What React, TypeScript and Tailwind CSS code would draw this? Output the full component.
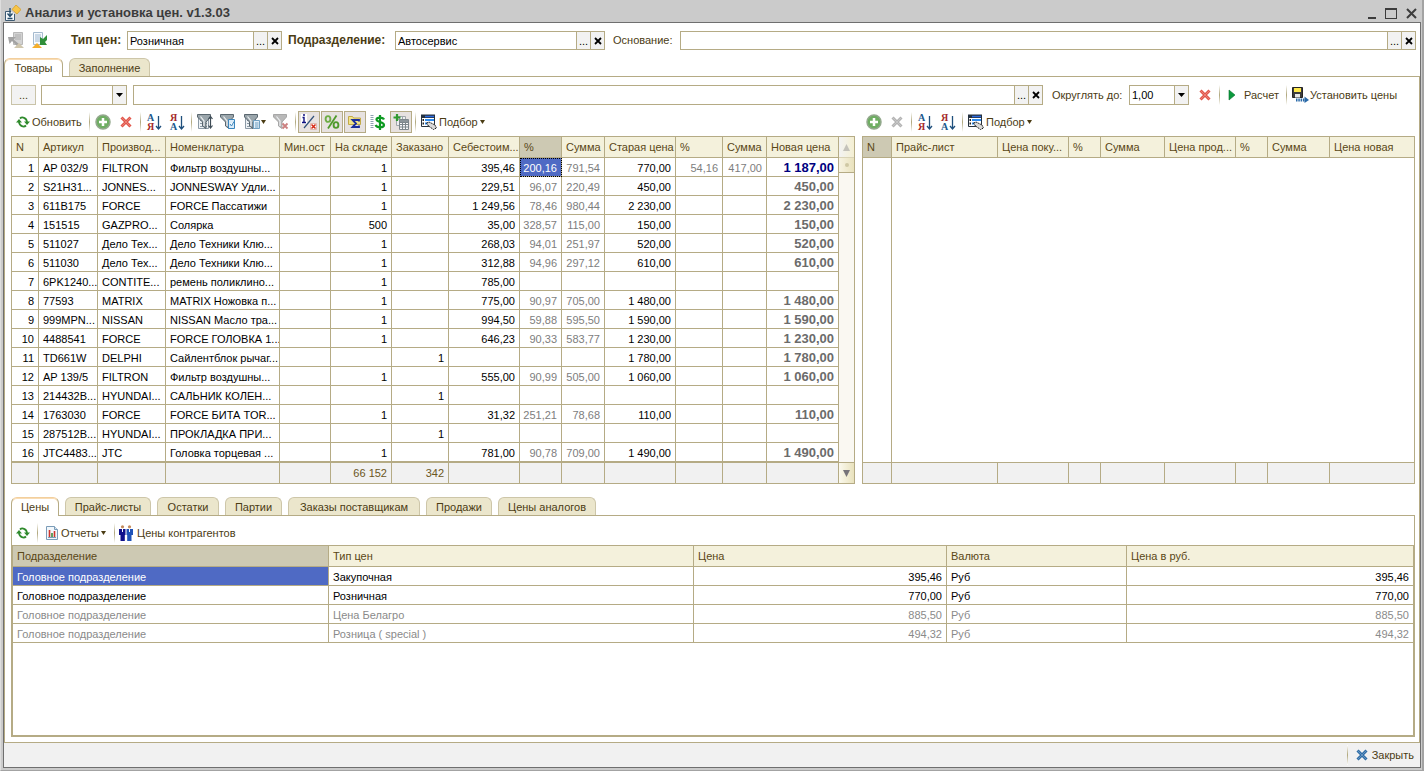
import { FC, ReactNode, useState } from 'react'
import clsx from 'clsx'

type IconProps = { className?: string }

const AppIcon: FC = () => (
	<svg width="16" height="16" viewBox="0 0 16 16" aria-hidden="true">
		<path d="M11 0l5 4.500-4 4.500-5-4.500z" fill="#f7c548" stroke="#d79a1c" strokeWidth=".7" />
		<path d="M6 6.500H.500v9h9V9" fill="#f4f8fb" stroke="#3d5a72" />
		<path d="M5 3v8M2.500 8.500L5 11.500l2.500-3M2.500 13.500h5" fill="none" stroke="#234a68" strokeWidth="1.300" />
	</svg>
)

const SheetIcon: FC<{ disabled?: boolean }> = ({ disabled }) => (
	<svg width="16" height="16" viewBox="0 0 16 16" aria-hidden="true">
		<path
			d={disabled ? 'M5.500.500h9v12h-9z' : 'M1.500.500h9v12h-9z'}
			fill={disabled ? '#d3d3d3' : '#f7fafd'}
			stroke={disabled ? '#b8b8b8' : '#a5bace'}
		/>
		<path
			d={disabled ? 'M7 3h6M7 5h6M7 7h6' : 'M3 3h6M3 5h6M3 7h6M3 9h6'}
			stroke={disabled ? '#adadad' : '#9cb6d0'}
		/>
		{disabled ? (
			<path d="M0 5h8L5.500 7.500 11 12l-2 2-5-5L1.500 12z" fill="#a3a3a3" />
		) : (
			<path d="M15 3l-4 4-3-2v8h7l-2-3 2-2z" fill="#2f8f3a" />
		)}
		<path d={disabled ? 'M6 16l5-5 5 5z' : 'M0 16l5-5 5 5z'} fill={disabled ? '#cfc6ad' : '#f4ae2c'} />
	</svg>
)

const RefreshIcon: FC = () => (
	<svg width="14" height="14" viewBox="0 0 14 14" aria-hidden="true">
		<path d="M4 3.500C6 1.500 10.500 2.500 11 7M10 10.500C8 12.500 3.500 11.500 3 7" fill="none" stroke="#2f8a2c" strokeWidth="1.800" />
		<path d="M8 6.500h6l-3 3.500zM0 7.500h6L3 4z" fill="#2f8a2c" />
	</svg>
)

const PlusIcon: FC = () => (
	<svg width="16" height="16" viewBox="0 0 16 16" aria-hidden="true">
		<circle cx="8" cy="8" r="7" fill="#6fae63" stroke="#93a88d" strokeWidth="1.500" />
		<path d="M8 4v8M4 8h8" stroke="#fff" strokeWidth="2.500" />
	</svg>
)

const CrossIcon: FC<IconProps> = ({ className }) => (
	<svg width="12" height="12" viewBox="0 0 12 12" className={className} aria-hidden="true">
		<path d="M1.500 1.500l9 9M10.500 1.500l-9 9" stroke="currentColor" strokeWidth="3" />
		<path d="M2 2l8 8M10 2l-8 8" stroke="#fff" strokeOpacity=".25" strokeWidth="1" />
	</svg>
)

const SortIcon: FC<{ desc?: boolean }> = ({ desc }) => (
	<svg width="16" height="18" viewBox="0 0 16 18" aria-hidden="true">
		<g className="font-['Liberation_Serif',serif] text-[10px] leading-none font-bold">
			<text x="1" y="8" fill={desc ? '#a52a2a' : '#20588c'}>{desc ? 'Я' : 'А'}</text>
			<text x="1" y="17" fill={desc ? '#20588c' : '#a52a2a'}>{desc ? 'А' : 'Я'}</text>
		</g>
		<path d="M12.500 3v13M10 13l2.500 3 2.500-3" fill="none" stroke="#1f4f7c" strokeWidth="1.300" />
	</svg>
)

const FilterIcon: FC<{ kind: 'sort' | 'check' | 'list' | 'off' }> = ({ kind }) => (
	<svg width="16" height="16" viewBox="0 0 16 16" className="shrink-0" aria-hidden="true">
		{(kind === 'sort' || kind === 'list') && (
			<path d="M1.500 2.500h10v12h-10zM3 6.500h7M3 9.500h7M3 12.500h7" fill="#eef2f5" stroke="#8c9aa6" />
		)}
		<path
			d="M.500.500h13v2.500L9 8v6.500L5.500 12V8L.500 3z"
			fill={kind === 'off' ? '#b9b9b9' : '#9aa5ab'}
			stroke={kind === 'off' ? '#a0a0a0' : '#4d5a63'}
			strokeWidth=".9"
		/>
		<path d="M3.500 2.500L7 7v5" fill="none" stroke="#eef1f3" strokeWidth="1.200" />
		{kind === 'sort' && <path d="M13.500 2v12M11.500 5l2-2.500 2 2.500M11.500 11.500l2 2.500 2-2.500" fill="none" stroke="#3f4d57" strokeWidth="1.200" />}
		{kind === 'check' && (
			<path d="M8.500 5.500h6v9h-6zM10 10l1.500 2L14 7.500" fill="#dcecf8" stroke="#3c86bd" />
		)}
		{kind === 'list' && <path d="M9.500 6.500h6v8h-6zM11 9h3.500M11 11h3.500M11 13h3.500" fill="#e4f0f9" stroke="#6f9fc0" />}
		{kind === 'off' && <path d="M9.500 9.500l5 5M14.500 9.500l-5 5" stroke="#cc8080" strokeWidth="1.800" />}
	</svg>
)

const MarginIcon: FC = () => (
	<svg width="16" height="16" viewBox="0 0 16 16" aria-hidden="true">
		<path d="M0 0h6v10H0z" fill="#fff" />
		<path d="M2 1h2M1.500 3.500H3V8M1 8.500h4" fill="none" stroke="#101080" strokeWidth="1.400" />
		<path d="M13 2L3 14" stroke="#32527c" strokeWidth="1.200" />
		<path d="M9.500 9.500h6v6h-6z" fill="#fff" stroke="#d8aaa0" strokeWidth=".8" />
		<path d="M10.500 10.500l4 4M14.500 10.500l-4 4" stroke="#d52510" strokeWidth="1.500" />
	</svg>
)

const PercentIcon: FC = () => (
	<svg width="16" height="16" viewBox="0 0 16 16" aria-hidden="true">
		<path d="M12.500 1.500L4 14.500" stroke="#4f9a2c" strokeWidth="1.800" />
		<ellipse cx="4" cy="5" rx="2.400" ry="2.900" fill="none" stroke="#6dad45" strokeWidth="1.900" />
		<ellipse cx="12" cy="11" rx="2.400" ry="2.900" fill="none" stroke="#4f9a2c" strokeWidth="1.900" />
	</svg>
)

const SumIcon: FC = () => (
	<svg width="16" height="16" viewBox="0 0 16 16" aria-hidden="true">
		<path d="M1.500 10.500v-8h4l1 1.500h7v6.500z" fill="#f3e58a" stroke="#c2aa48" />
		<path d="M12 7.500V6H5.500L9 9.500 5.500 13H12v-1.500" fill="none" stroke="#1b2f9c" strokeWidth="1.800" />
	</svg>
)

const DollarIcon: FC = () => (
	<svg width="16" height="16" viewBox="0 0 16 16" aria-hidden="true">
		<path d="M2 1v14" stroke="#8ea2b2" strokeWidth="3" strokeDasharray="1 1" />
		<path d="M14 5.500C13 3 6.500 2.800 6.500 5.500S14 8 14 11s-7 3-8.500 0M10 1v15" fill="none" stroke="#0d9a22" strokeWidth="2.200" />
	</svg>
)

const TableAddIcon: FC = () => (
	<svg width="17" height="16" viewBox="0 0 17 16" aria-hidden="true">
		<path d="M3.500 2.500h9v9h-9zM3 5.500h9M6.500 3v8M9.500 3v8" fill="#eef0f1" stroke="#a0a7ab" />
		<path d="M6.500 5.500h9v10h-9zM6 8.500h9M6 10.500h9M6 13h9M9.500 8v8M12.500 8v8" fill="#f7f8f9" stroke="#7d868b" />
		<path d="M7 6h8v2H7z" fill="#8b9499" />
		<path d="M4 0v7M.500 3.500h7" stroke="#2f9a2f" strokeWidth="2.200" />
	</svg>
)

const PickIcon: FC = () => (
	<svg width="17" height="16" viewBox="0 0 17 16" aria-hidden="true">
		<path d="M1.500 1.500h13v11h-13z" fill="#fff" stroke="#26313c" />
		<path d="M1 .500h14v3.500H1z" fill="#24313f" />
		<path d="M5 2.500h9" stroke="#2c6be0" strokeWidth="1.500" />
		<path d="M5 6h9M5 9.500h5" stroke="#2c8bf0" strokeWidth="2" />
		<path d="M2.500 6h1.500M2.500 9.500h1.500" stroke="#222" strokeWidth="2" />
		<path d="M6.500 9l2.500-1 6 3 1.500 3-3 1.500-5-3.500z" fill="#d9d9d9" stroke="#1d1d1d" strokeDasharray="1.500 .700" />
	</svg>
)

const PlayIcon: FC = () => (
	<svg width="8" height="12" viewBox="0 0 8 12" aria-hidden="true">
		<path d="M1 1l6 5-6 5z" fill="#0b9a3d" stroke="#08702b" strokeWidth=".6" />
	</svg>
)

const SaveIcon: FC = () => (
	<svg width="17" height="16" viewBox="0 0 17 16" aria-hidden="true">
		<path d="M.500.500h10v10H.500z" fill="#3d3d3d" stroke="#252525" />
		<path d="M2 1h7v4H2z" fill="#ffe94a" />
		<path d="M3 7h5v3.500H3z" fill="#e8e8e8" />
		<path d="M4 13h9" stroke="#2969a8" strokeWidth="3" strokeDasharray="1.500 .800" />
		<path d="M12.500 9.500L17 13l-4.500 3z" fill="#2969a8" />
	</svg>
)

const ReportIcon: FC = () => (
	<svg width="13" height="14" viewBox="0 0 13 14" aria-hidden="true">
		<path d="M.500.500h8l3 3v10H.500z" fill="#f2f7fb" stroke="#7b9cb8" />
		<path d="M8.500.500v3h3" fill="#d3e2ee" stroke="#7b9cb8" />
		<path d="M3.500 4v7" stroke="#d0352b" strokeWidth="1.600" />
		<path d="M6 7v4" stroke="#3b8a3a" strokeWidth="1.600" />
		<path d="M8.500 5v6" stroke="#d0352b" strokeWidth="1.600" />
		<path d="M2 11.500h8" stroke="#7b9cb8" />
	</svg>
)

const PeopleIcon: FC = () => (
	<svg width="14" height="16" viewBox="0 0 14 16" aria-hidden="true">
		<circle cx="3.500" cy="1.800" r="1.600" fill="#c58c5e" />
		<circle cx="10.500" cy="1.800" r="1.600" fill="#c58c5e" />
		<path d="M0 4h6.500v6H5.800v6H1.500v-6H0z" fill="#10108c" />
		<path d="M7.500 4H14v6h-1.500v6H8.200v-6h-.700z" fill="#1f52b8" />
		<path d="M3.500 3.500V7M10.500 3.500V7" stroke="#fff" />
	</svg>
)

const Arrow: FC<IconProps> = ({ className }) => (
	<svg width="7" height="4" viewBox="0 0 7 4" preserveAspectRatio="none" className={className} aria-hidden="true">
		<path d="M0 0h7L3.500 4z" fill="currentColor" />
	</svg>
)

const Separator: FC = () => (
	<span className="flex h-5 w-1 shrink-0 justify-center">
		<span className="w-px bg-linear-to-b from-white via-[#b0a77c] to-white" />
	</span>
)

const IconButton: FC<{ label: string; pressed?: boolean; className?: string; children: ReactNode }> = ({
	label,
	pressed,
	className = 'w-[22px]',
	children
}) => (
	<button
		type="button"
		aria-label={label}
		title={label}
		className={clsx(
			'flex h-[22px] shrink-0 items-center justify-center border',
			pressed ? 'border-[#b5ab85] bg-[#e7e2e0]' : 'border-transparent',
			className
		)}
	>
		{children}
	</button>
)

const TextButton: FC<{ className?: string; children: ReactNode }> = ({ className, children }) => (
	<button type="button" className={clsx('flex h-[22px] shrink-0 items-center whitespace-nowrap', className)}>
		{children}
	</button>
)

const SmallButton: FC<{ label: string; children: ReactNode }> = ({ label, children }) => (
	<button
		type="button"
		aria-label={label}
		className="flex w-[14px] shrink-0 items-center justify-center border-l border-[#b5ab85] bg-[#f2f2f2] text-black"
	>
		{children}
	</button>
)

const Field: FC<{ id: string; label?: string; value?: string; dropdown?: boolean; className?: string }> = ({
	id,
	label,
	value = '',
	dropdown,
	className
}) => {
	const [text, setText] = useState(value)
	return (
		<div className={clsx('flex border border-[#b5ab85] bg-white', className)}>
			<input
				id={id}
				aria-label={label}
				value={text}
				onChange={(e) => setText(e.target.value)}
				className="w-0 min-w-0 flex-1 px-0.5 text-black outline-none"
			/>
			{dropdown ? (
				<SmallButton label="Открыть список">
					<Arrow />
				</SmallButton>
			) : (
				<>
					<SmallButton label="Выбрать">...</SmallButton>
					<SmallButton label="Очистить">
						<svg width="8" height="8" viewBox="0 0 8 8" aria-hidden="true">
							<path d="M1 1l6 6M7 1L1 7" stroke="#000" strokeWidth="1.800" />
						</svg>
					</SmallButton>
				</>
			)}
		</div>
	)
}

const Tabs: FC<{ items: { name: string; width: string }[] }> = ({ items }) => {
	const [active, setActive] = useState(items[0].name)
	return (
		<div role="tablist" className="flex h-[18px] gap-[6px]">
			{items.map(({ name, width }) => (
				<button
					key={name}
					type="button"
					role="tab"
					aria-selected={name === active}
					onClick={() => setActive(name)}
					className={clsx(
						'rounded-t-md border border-b-0 whitespace-nowrap',
						width,
						name === active
							? 'z-10 h-[19px] border-[#b5ab85] border-t-[#f2cf9d] bg-white shadow-[inset_0_1px_0_#f9dcb4]'
							: 'h-[18px] border-[#cdc6a9] bg-[#ebe6cc]'
					)}
				>
					{name}
				</button>
			))}
		</div>
	)
}

const goodsColumns = [
	{ title: 'N', width: 'w-[27px]' },
	{ title: 'Артикул', width: 'w-[59px]' },
	{ title: 'Производ...', width: 'w-[68px]' },
	{ title: 'Номенклатура', width: 'w-[114px]' },
	{ title: 'Мин.ост', width: 'w-[51px]' },
	{ title: 'На складе', width: 'w-[61px]' },
	{ title: 'Заказано', width: 'w-[57px]' },
	{ title: 'Себестоим...', width: 'w-[71px]' },
	{ title: '%', width: 'w-[42px]' },
	{ title: 'Сумма', width: 'w-[43px]' },
	{ title: 'Старая цена', width: 'w-[71px]' },
	{ title: '%', width: 'w-[47px]' },
	{ title: 'Сумма', width: 'w-[44px]' },
	{ title: 'Новая цена', width: 'w-[72px]' }
]

const goods = [
	['1', 'AP 032/9', 'FILTRON', 'Фильтр воздушны...', '', '1', '', '395,46', '200,16', '791,54', '770,00', '54,16', '417,00', '1 187,00'],
	['2', 'S21H31...', 'JONNES...', 'JONNESWAY Удли...', '', '1', '', '229,51', '96,07', '220,49', '450,00', '', '', '450,00'],
	['3', '611B175', 'FORCE', 'FORCE Пассатижи', '', '1', '', '1 249,56', '78,46', '980,44', '2 230,00', '', '', '2 230,00'],
	['4', '151515', 'GAZPRO...', 'Солярка', '', '500', '', '35,00', '328,57', '115,00', '150,00', '', '', '150,00'],
	['5', '511027', 'Дело Тех...', 'Дело Техники Клю...', '', '1', '', '268,03', '94,01', '251,97', '520,00', '', '', '520,00'],
	['6', '511030', 'Дело Тех...', 'Дело Техники Клю...', '', '1', '', '312,88', '94,96', '297,12', '610,00', '', '', '610,00'],
	['7', '6PK1240...', 'CONTITE...', 'ремень поликлино...', '', '1', '', '785,00', '', '', '', '', '', ''],
	['8', '77593', 'MATRIX', 'MATRIX Ножовка п...', '', '1', '', '775,00', '90,97', '705,00', '1 480,00', '', '', '1 480,00'],
	['9', '999MPN...', 'NISSAN', 'NISSAN Масло тра...', '', '1', '', '994,50', '59,88', '595,50', '1 590,00', '', '', '1 590,00'],
	['10', '4488541', 'FORCE', 'FORCE ГОЛОВКА 1...', '', '1', '', '646,23', '90,33', '583,77', '1 230,00', '', '', '1 230,00'],
	['11', 'TD661W', 'DELPHI', 'Сайлентблок рычаг...', '', '', '1', '', '', '', '1 780,00', '', '', '1 780,00'],
	['12', 'AP 139/5', 'FILTRON', 'Фильтр воздушны...', '', '1', '', '555,00', '90,99', '505,00', '1 060,00', '', '', '1 060,00'],
	['13', '214432B...', 'HYUNDAI...', 'САЛЬНИК КОЛЕН...', '', '', '1', '', '', '', '', '', '', ''],
	['14', '1763030', 'FORCE', 'FORCE БИТА TOR...', '', '1', '', '31,32', '251,21', '78,68', '110,00', '', '', '110,00'],
	['15', '287512B...', 'HYUNDAI...', 'ПРОКЛАДКА ПРИ...', '', '', '1', '', '', '', '', '', '', ''],
	['16', 'JTC4483...', 'JTC', 'Головка торцевая ...', '', '1', '', '781,00', '90,78', '709,00', '1 490,00', '', '', '1 490,00']
]

const goodsTotals = ['', '', '', '', '', '66 152', '342', '', '', '', '', '', '', '']

const priceListColumns = [
	{ title: 'N', width: 'w-[29px]' },
	{ title: 'Прайс-лист', width: 'w-[106px]' },
	{ title: 'Цена поку...', width: 'w-[71px]' },
	{ title: '%', width: 'w-[32px]' },
	{ title: 'Сумма', width: 'w-[64px]' },
	{ title: 'Цена прод...', width: 'w-[71px]' },
	{ title: '%', width: 'w-[32px]' },
	{ title: 'Сумма', width: 'w-[62px]' },
	{ title: 'Цена новая', width: 'w-[85px]' }
]

const priceColumns = [
	{ title: 'Подразделение', width: 'w-[316px]' },
	{ title: 'Тип цен', width: 'w-[365px]' },
	{ title: 'Цена', width: 'w-[253px]' },
	{ title: 'Валюта', width: 'w-[180px]' },
	{ title: 'Цена в руб.', width: 'w-[286px]' }
]

const prices = [
	{ cells: ['Головное подразделение', 'Закупочная', '395,46', 'Руб', '395,46'], muted: false },
	{ cells: ['Головное подразделение', 'Розничная', '770,00', 'Руб', '770,00'], muted: false },
	{ cells: ['Головное подразделение', 'Цена Белагро', '885,50', 'Руб', '885,50'], muted: true },
	{ cells: ['Головное подразделение', 'Розница ( special )', '494,32', 'Руб', '494,32'], muted: true }
]

const HeadRow: FC<{ columns: { title: string; width: string }[]; current: number; openEnd?: boolean }> = ({
	columns,
	current,
	openEnd
}) => (
	<thead>
		<tr>
			{columns.map(({ title, width }, i) => (
				<th
					key={i}
					scope="col"
					className={clsx(
						'h-[21px] overflow-hidden border-b border-[#b5ab85] pl-1 text-left font-normal whitespace-nowrap text-[#5a4716]',
						width,
						!(openEnd && i === columns.length - 1) && 'border-r',
						i === current ? 'bg-[#cdc9b3]' : 'bg-[#f4f1dc]'
					)}
				>
					{title}
				</th>
			))}
		</tr>
	</thead>
)

const goodsCellStyle = (row: number, col: number) => {
	if (row === 0 && col === 8) return 'bg-[#4f6ac4] text-white outline-1 -outline-offset-1 outline-dotted outline-black'
	if (col === 13) return row === 0 ? 'text-[13px] font-bold text-[#000080]' : 'text-[13px] font-bold text-[#6b6b6b]'
	if ([8, 9, 11, 12].includes(col)) return 'text-[#7d7d7d]'
	return 'text-black'
}

const GoodsTable: FC = () => (
	<div className="flex">
		<table className="w-full table-fixed border-separate border-spacing-0 border-t border-l border-[#b5ab85] bg-white">
			<HeadRow columns={goodsColumns} current={8} />
			<tbody>
				{goods.map((row, r) => (
					<tr key={row[0]}>
						{row.map((cell, c) => (
							<td
								key={c}
								className={clsx(
									'h-[19px] overflow-hidden border-r border-b border-[#b5ab85] pt-0.5 whitespace-nowrap',
									c === 0 || c > 3 ? 'pr-1 text-right' : 'pl-1 text-left',
									goodsCellStyle(r, c)
								)}
							>
								{cell}
							</td>
						))}
					</tr>
				))}
			</tbody>
			<tfoot>
				<tr>
					{goodsTotals.map((total, i) => (
						<td
							key={i}
							className="h-[22px] border-y border-r border-[#b5ab85] bg-[#f1f1f1] pr-1 text-right text-[#6b5622]"
						>
							{total}
						</td>
					))}
				</tr>
			</tfoot>
		</table>
		<div className="flex w-4 shrink-0 flex-col border-y border-r border-[#b5ab85] bg-[#faf8f2]">
			<button
				type="button"
				aria-label="Прокрутить вверх"
				className="flex h-[21px] items-center justify-center border-b border-[#d9d3b6] bg-linear-to-r from-[#f3f3f3] to-[#f4efd2] text-[#c4c2ba]"
			>
				<Arrow className="h-[7px] rotate-180" />
			</button>
			<div className="flex h-[15px] items-center justify-center border-b border-[#b5ab85] bg-linear-to-r from-[#f7f3e2] to-[#e9e2bd]">
				<span className="size-1 rounded-full bg-[#cfc8a4]" />
			</div>
			<button
				type="button"
				aria-label="Прокрутить вниз"
				className="mt-auto flex h-[21px] items-center justify-center border-t border-[#b5ab85] bg-linear-to-r from-[#fbf9ee] to-[#e9e2bd] text-[#77747a]"
			>
				<Arrow className="h-[7px]" />
			</button>
		</div>
	</div>
)

const PriceListTable: FC = () => (
	<table className="w-full flex-1 table-fixed border-separate border-spacing-0 border-t border-l border-[#b5ab85] bg-white">
		<HeadRow columns={priceListColumns} current={0} />
		<tbody>
			<tr>
				<td className="h-[304px] border-r border-[#b5ab85]" />
				<td colSpan={8} className="border-r border-[#b5ab85]" />
			</tr>
		</tbody>
		<tfoot>
			<tr>
				{priceListColumns.map((_, i) => (
					<td key={i} className="h-[22px] border-y border-r border-[#b5ab85] bg-[#f1f1f1]" />
				))}
			</tr>
		</tfoot>
	</table>
)

const PricesTable: FC = () => (
	<div className="flex-1 border border-[#b5ab85] bg-white">
		<table className="w-full table-fixed border-separate border-spacing-0">
			<HeadRow columns={priceColumns} current={0} openEnd />
			<tbody>
				{prices.map(({ cells, muted }, r) => (
					<tr key={cells[1]} className={muted ? 'text-[#8a8a8a]' : 'text-black'}>
						{cells.map((cell, c) => (
							<td
								key={c}
								className={clsx(
									'h-[19px] border-b border-[#b5ab85] px-1 pt-0.5',
									c < 4 && 'border-r',
									(c === 2 || c === 4) && 'text-right',
									r === 0 && c === 0 && 'bg-[#4f6ac4] text-white'
								)}
							>
								{cell}
							</td>
						))}
					</tr>
				))}
			</tbody>
		</table>
	</div>
)

const PickButton: FC = () => (
	<TextButton className="gap-0.5 pl-0.5">
		<PickIcon />
		<span>Подбор</span>
		<Arrow className="w-[5px]" />
	</TextButton>
)

const TitleBar: FC = () => (
	<header className="flex h-[22px] items-center pt-1 pr-1 pl-0.5 text-[#3c3c3c]">
		<AppIcon />
		<h1 className="ml-1 flex-1 text-[13px] font-bold">Анализ и установка цен. v1.3.03</h1>
		<div className="flex items-center gap-[9px]">
			<button type="button" aria-label="Свернуть" className="flex h-3 w-2 items-end">
				<span className="h-0.5 w-2 bg-[#3c3c3c]" />
			</button>
			<button type="button" aria-label="Развернуть" className="h-[11px] w-3 border border-t-2 border-[#3c3c3c]" />
			<button type="button" aria-label="Закрыть окно">
				<svg width="11" height="11" viewBox="0 0 11 11" aria-hidden="true">
					<path d="M1 1l9 9M10 1l-9 9" stroke="#3c3c3c" strokeWidth="2" />
				</svg>
			</button>
		</div>
	</header>
)

const GoodsPanel: FC = () => (
	<div className="min-w-0 flex-[844]">
		<div className="mt-[6px] mb-[3px] flex items-center gap-px">
			<TextButton className="w-[75px] gap-0.5 pl-[5px]">
				<RefreshIcon />
				Обновить
			</TextButton>
			<Separator />
			<IconButton label="Добавить"><PlusIcon /></IconButton>
			<IconButton label="Удалить"><CrossIcon className="text-[#e2564a]" /></IconButton>
			<Separator />
			<IconButton label="Сортировать по возрастанию"><SortIcon /></IconButton>
			<IconButton label="Сортировать по убыванию"><SortIcon desc /></IconButton>
			<Separator />
			<IconButton label="Отбор и сортировка"><FilterIcon kind="sort" /></IconButton>
			<IconButton label="Отбор по значению"><FilterIcon kind="check" /></IconButton>
			<IconButton label="История отборов" className="w-[29px] gap-px">
				<FilterIcon kind="list" />
				<Arrow className="w-[5px]" />
			</IconButton>
			<IconButton label="Отключить отбор"><FilterIcon kind="off" /></IconButton>
			<Separator />
			<IconButton label="Показатели" pressed><MarginIcon /></IconButton>
			<IconButton label="Проценты" pressed><PercentIcon /></IconButton>
			<IconButton label="Суммы" pressed><SumIcon /></IconButton>
			<IconButton label="Валюта"><DollarIcon /></IconButton>
			<IconButton label="Колонки" pressed><TableAddIcon /></IconButton>
			<Separator />
			<PickButton />
		</div>
		<GoodsTable />
	</div>
)

const PriceListPanel: FC = () => (
	<div className="flex min-w-0 flex-[553] flex-col">
		<div className="mt-[6px] mb-[3px] flex items-center gap-px pl-px">
			<IconButton label="Добавить"><PlusIcon /></IconButton>
			<IconButton label="Удалить"><CrossIcon className="text-[#b3b3b3]" /></IconButton>
			<Separator />
			<IconButton label="Сортировать по возрастанию"><SortIcon /></IconButton>
			<IconButton label="Сортировать по убыванию"><SortIcon desc /></IconButton>
			<Separator />
			<PickButton />
		</div>
		<PriceListTable />
	</div>
)

const App: FC = () => (
	<div className="flex min-h-screen flex-col border-r-2 border-b border-l border-[#a3a3a3] border-l-[#dedede] bg-[#cbcbcb] pr-px pb-0.5 pl-0.5 font-['Liberation_Sans',Arial,sans-serif] text-[11px] leading-4 text-[#4b3c14]">
		<TitleBar />
		<main className="flex flex-1 flex-col border border-[#6f6f6f] bg-white">
			<div className="flex h-[27px] items-end pr-1 pl-1">
				<button type="button" aria-label="Предыдущий документ" className="mb-0.5"><SheetIcon disabled /></button>
				<button type="button" aria-label="Открыть документ" className="mb-0.5 ml-2"><SheetIcon /></button>
				<label htmlFor="price-type" className="ml-[23px] w-14 text-xs leading-[19px] font-bold whitespace-nowrap">Тип цен:</label>
				<Field id="price-type" value="Розничная" className="h-[19px] w-[155px]" />
				<label htmlFor="department" className="ml-[6px] w-[107px] text-xs leading-[19px] font-bold whitespace-nowrap">Подразделение:</label>
				<Field id="department" value="Автосервис" className="h-[19px] w-[210px]" />
				<label htmlFor="reason" className="ml-2 w-[67px] leading-[19px]">Основание:</label>
				<Field id="reason" className="h-[19px] flex-1" />
			</div>

			<div className="mt-2">
				<Tabs items={[{ name: 'Товары', width: 'w-[59px]' }, { name: 'Заполнение', width: 'w-[81px]' }]} />
			</div>
			<section className="flex flex-1 flex-col border border-[#b5ab85] pt-2 pr-1 pb-[5px] pl-[6px]">
				<div className="flex h-5 items-center">
					<button type="button" aria-label="Выбрать вид цены" className="h-5 w-[25px] border border-[#c9c3a8] bg-[#f2f2f2]">...</button>
					<Field id="mode" label="Вид отбора" dropdown className="ml-[5px] h-5 w-[86px]" />
					<Field id="filter" label="Значение отбора" className="ml-[6px] h-5 flex-1" />
					<label htmlFor="round" className="ml-[9px] w-[77px] whitespace-nowrap">Округлять до:</label>
					<Field id="round" value="1,00" dropdown className="h-5 w-[60px]" />
					<div className="ml-[5px] flex items-center gap-px">
						<IconButton label="Сбросить"><CrossIcon className="text-[#e2564a]" /></IconButton>
						<Separator />
						<TextButton className="w-[61px] gap-2 pl-[6px]"><PlayIcon />Расчет</TextButton>
						<Separator />
						<TextButton className="w-[126px] gap-px pl-[3px]"><SaveIcon />Установить цены</TextButton>
					</div>
				</div>

				<div className="flex gap-[7px]">
					<GoodsPanel />
					<PriceListPanel />
				</div>

				<div className="mt-[13px]">
					<Tabs
						items={[
							{ name: 'Цены', width: 'w-12' },
							{ name: 'Прайс-листы', width: 'w-[86px]' },
							{ name: 'Остатки', width: 'w-[62px]' },
							{ name: 'Партии', width: 'w-[57px]' },
							{ name: 'Заказы поставщикам', width: 'w-[132px]' },
							{ name: 'Продажи', width: 'w-[66px]' },
							{ name: 'Цены аналогов', width: 'w-[98px]' }
						]}
					/>
				</div>
				<div className="flex flex-1 flex-col border border-[#b5ab85]">
					<div className="flex h-[29px] items-center gap-px pt-1">
						<IconButton label="Обновить"><RefreshIcon /></IconButton>
						<Separator />
						<TextButton className="w-[71px] gap-0.5 pl-[6px]">
							<ReportIcon />
							Отчеты
							<Arrow className="w-[5px]" />
						</TextButton>
						<Separator />
						<TextButton className="gap-1 pl-0.5"><PeopleIcon />Цены контрагентов</TextButton>
					</div>
					<PricesTable />
				</div>
			</section>

			<footer className="flex h-6 items-center justify-end bg-[#f1f1f1] pr-[6px]">
				<Separator />
				<TextButton className="gap-1 pl-[6px]">
					<CrossIcon className="text-[#2f6ea8]" />
					Закрыть
				</TextButton>
			</footer>
		</main>
	</div>
)

export default App
